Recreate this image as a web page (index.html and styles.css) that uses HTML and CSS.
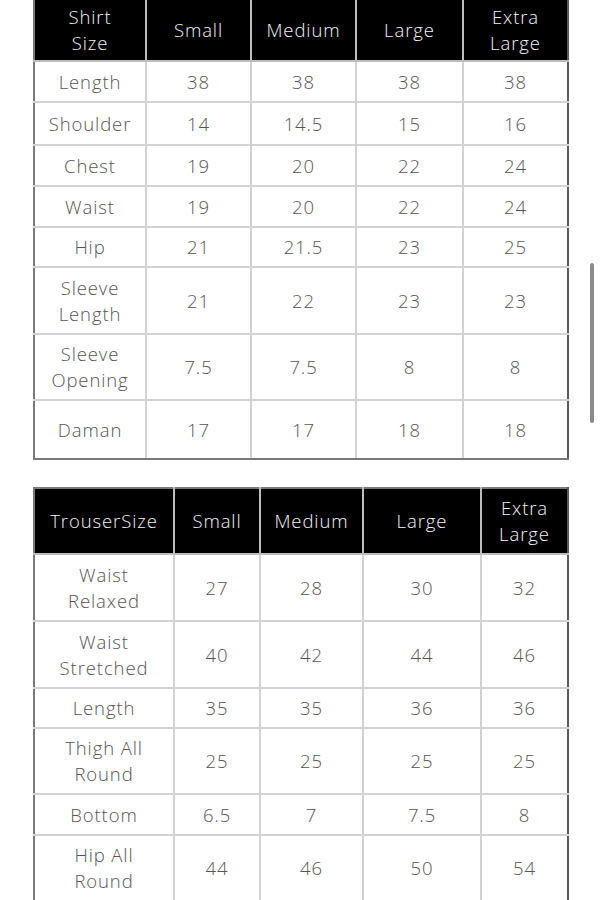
FILE: index.html
```html
<!DOCTYPE html>
<html>
<head>
<meta charset="utf-8">
<link rel="stylesheet" href="styles.css">
</head>
<body>
<div class="page">
  <table class="size shirt">
    <colgroup><col class="c1"><col class="c2"><col class="c3"><col class="c4"><col class="c5"></colgroup>
    <tr class="head h62"><th>Shirt<br>Size</th><th>Small</th><th>Medium</th><th>Large</th><th>Extra<br>Large</th></tr>
    <tr class="h41"><td>Length</td><td>38</td><td>38</td><td>38</td><td>38</td></tr>
    <tr class="h43"><td>Shoulder</td><td>14</td><td>14.5</td><td>15</td><td>16</td></tr>
    <tr class="h41"><td>Chest</td><td>19</td><td>20</td><td>22</td><td>24</td></tr>
    <tr class="h41"><td>Waist</td><td>19</td><td>20</td><td>22</td><td>24</td></tr>
    <tr class="h40"><td>Hip</td><td>21</td><td>21.5</td><td>23</td><td>25</td></tr>
    <tr class="h67"><td>Sleeve<br>Length</td><td>21</td><td>22</td><td>23</td><td>23</td></tr>
    <tr class="h66"><td>Sleeve<br>Opening</td><td>7.5</td><td>7.5</td><td>8</td><td>8</td></tr>
    <tr class="h59"><td>Daman</td><td>17</td><td>17</td><td>18</td><td>18</td></tr>
  </table>

  <table class="size trouser">
    <colgroup><col class="c1"><col class="c2"><col class="c3"><col class="c4"><col class="c5"></colgroup>
    <tr class="head h66"><th>TrouserSize</th><th>Small</th><th>Medium</th><th>Large</th><th>Extra<br>Large</th></tr>
    <tr class="h67"><td>Waist<br>Relaxed</td><td>27</td><td>28</td><td>30</td><td>32</td></tr>
    <tr class="h67"><td>Waist<br>Stretched</td><td>40</td><td>42</td><td>44</td><td>46</td></tr>
    <tr class="h40"><td>Length</td><td>35</td><td>35</td><td>36</td><td>36</td></tr>
    <tr class="h66"><td>Thigh All<br>Round</td><td>25</td><td>25</td><td>25</td><td>25</td></tr>
    <tr class="h41"><td>Bottom</td><td>6.5</td><td>7</td><td>7.5</td><td>8</td></tr>
    <tr class="h66"><td>Hip All<br>Round</td><td>44</td><td>46</td><td>50</td><td>54</td></tr>
  </table>
</div>
<div class="scrollbar"></div>
</body>
</html>
```

FILE: styles.css
```css
html, body {
  margin: 0;
  padding: 0;
  background: #ffffff;
}
body {
  font-family: "Open Sans", "Lato", sans-serif;
  color: #555555;
  overflow: hidden;
  height: 900px;
}
.page {
  padding-left: 33px;
  width: 534px;
}
.size {
  border-collapse: collapse;
  table-layout: fixed;
  width: 534px;
  border: 2px solid #7a7a7a;
}
.shirt {
  margin-top: -2px;
}
.trouser {
  margin-top: 27px;
}
.size td, .size th {
  border: 2px solid #d2d2d2;
  text-align: center;
  vertical-align: middle;
  padding: 0;
  font-size: 18.5px;
  line-height: 26px;
  letter-spacing: 0.9px;
  font-weight: 300;
}
.size th {
  background: #000000;
  color: #f4f4f4;
  border-color: #bdbdbd;
}
.size tr.head th {
  border-top-color: #7a7a7a;
}
.size tr td:first-child, .size tr th:first-child { border-left-color: #7a7a7a; }
.size tr td:last-child, .size tr th:last-child { border-right-color: #5a5a5a; }
.size tr:last-child td { border-bottom-color: #7a7a7a; }

.shirt .c1 { width: 112px; }
.shirt .c2 { width: 105px; }
.shirt .c3 { width: 105px; }
.shirt .c4 { width: 107px; }
.shirt .c5 { width: 105px; }

.trouser .c1 { width: 140px; }
.trouser .c2 { width: 86px; }
.trouser .c3 { width: 103px; }
.trouser .c4 { width: 118px; }
.trouser .c5 { width: 87px; }

.h40 { height: 40px; }
.h41 { height: 41px; }
.h43 { height: 43px; }
.h59 { height: 59px; }
.h62 { height: 62px; }
.h66 { height: 66px; }
.h67 { height: 67px; }

.scrollbar {
  position: absolute;
  left: 590px;
  top: 263px;
  width: 4px;
  height: 160px;
  border-radius: 2px;
  background: #8a8a8a;
}
```
